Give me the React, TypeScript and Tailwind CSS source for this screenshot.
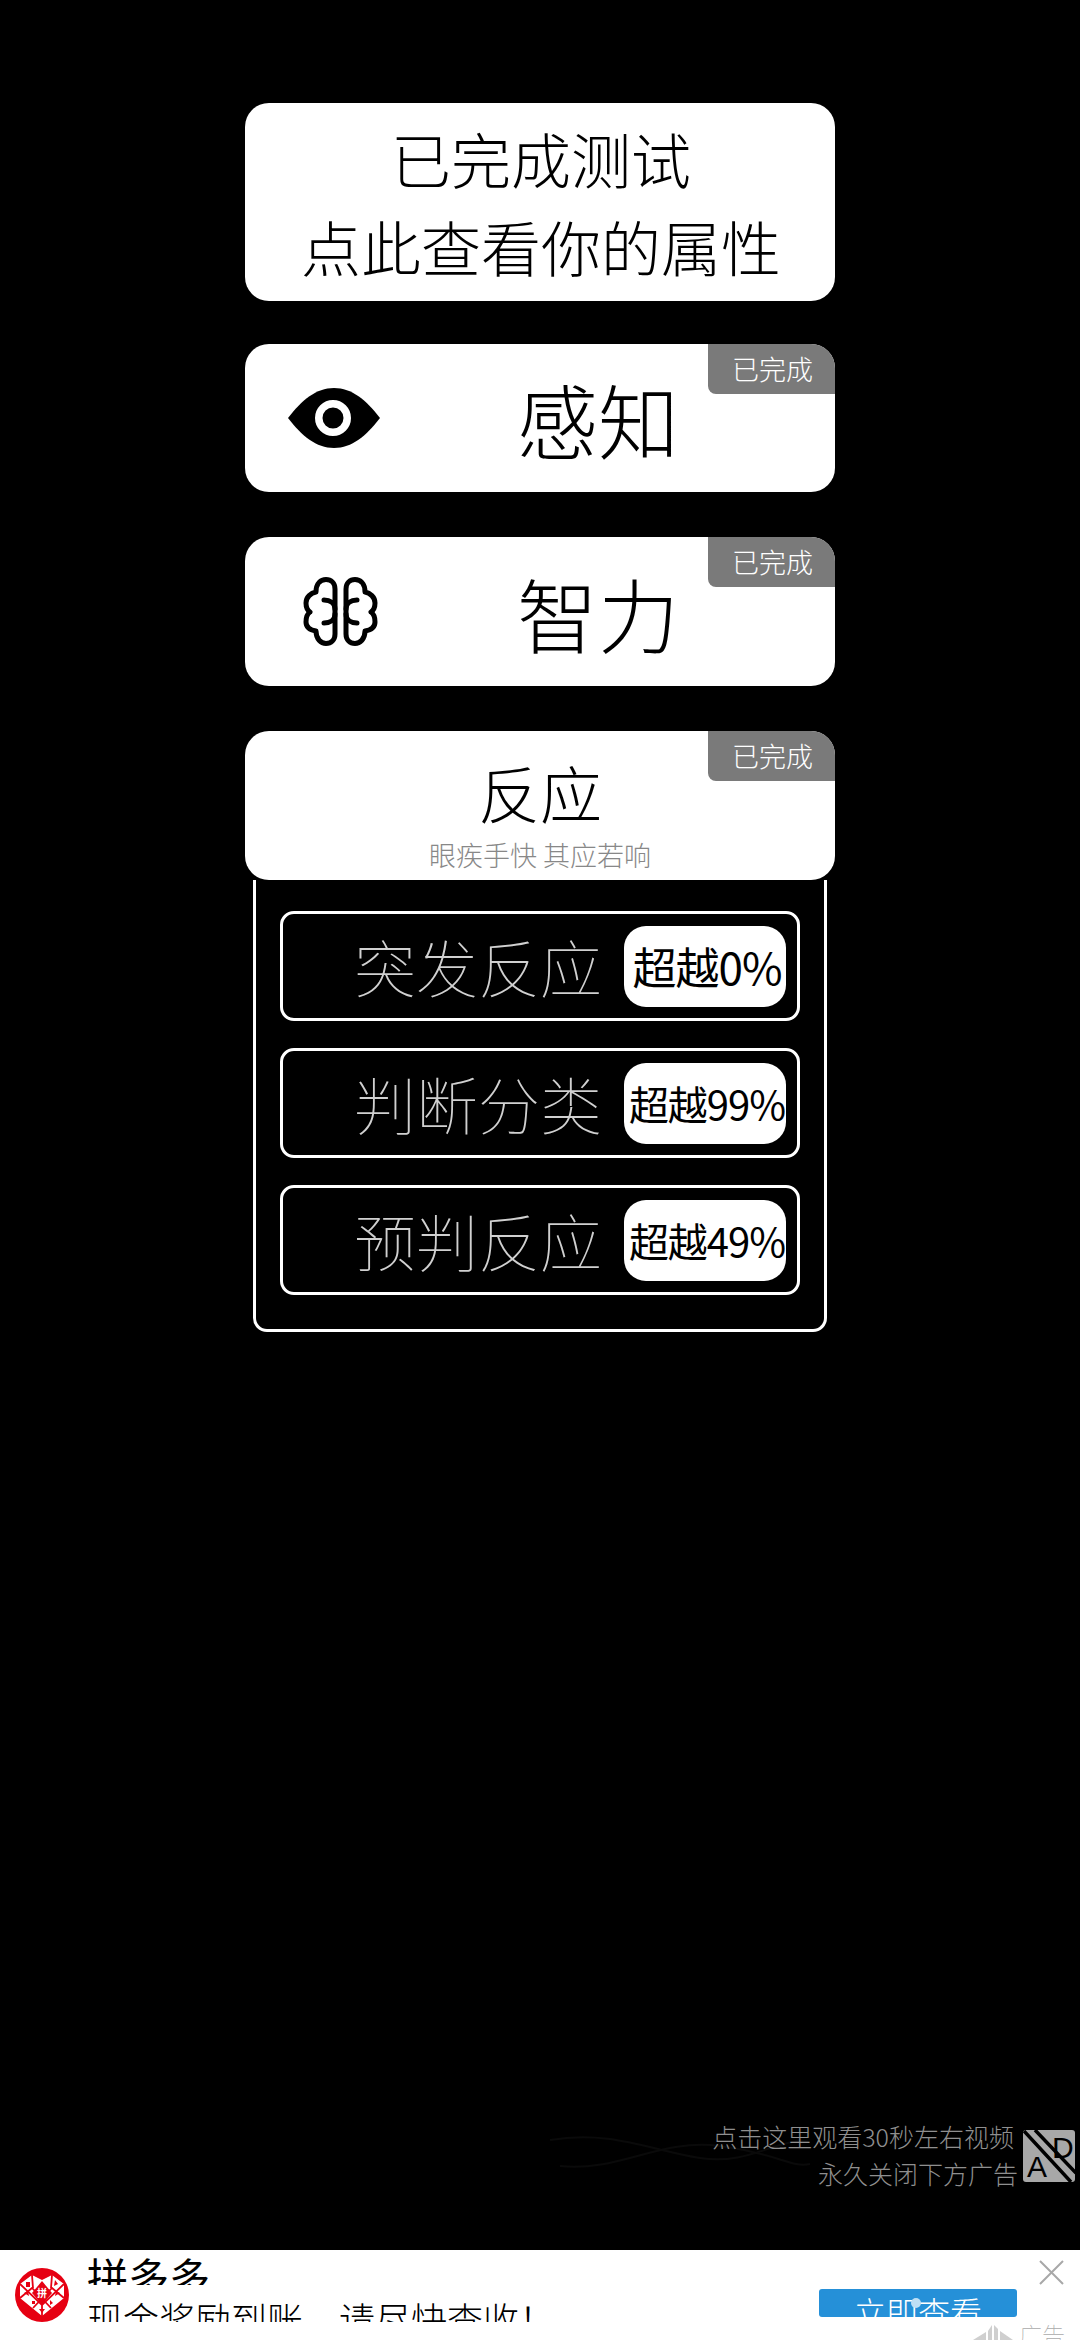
import React from "react";

const cjk = "font-['Noto_Sans_CJK_SC','Noto_Sans',sans-serif]";

function Badge() {
  return (
    <div className="absolute right-0 top-0 flex h-[50px] w-[127px] items-center justify-end rounded-tr-[24px] rounded-bl-[8px] bg-[#7a7a7a] pr-[22px] text-[27px] font-light text-white">
      已完成
    </div>
  );
}

function EyeIcon() {
  return (
    <svg width="92" height="60" viewBox="0 0 92 60">
      <path d="M0 30C14 12 28 0 46 0s32 12 46 30C78 48 64 60 46 60S14 48 0 30Z" fill="#000" />
      <circle cx="45" cy="30" r="14.25" fill="none" stroke="#fff" strokeWidth="7.5" />
    </svg>
  );
}

function BrainLobe() {
  return (
    <>
      <path d="M33 12C33 6 29 2.5 24 2.5S14 6 14 15C9 16 4 20 4 26c0 4 1 7 4 9-3 2-4 6-4 10 0 5 4 8 10 9 0 8 5 12.500 10 12.500S33 63 33 57Z" />
      <path d="M22 23c6 0 11 3 11 9" />
      <path d="M22 46c6 0 11-3 11-9" />
    </>
  );
}

function BrainIcon() {
  return (
    <svg width="77" height="69" viewBox="0 0 77 69" fill="none" stroke="#000" strokeWidth="5" strokeLinecap="round" strokeLinejoin="round">
      <BrainLobe />
      <g transform="translate(77 0) scale(-1 1)">
        <BrainLobe />
      </g>
    </svg>
  );
}

function Row({ label, value, size }: { label: string; value: string; size: string }) {
  return (
    <div className="flex h-[110px] items-center justify-end rounded-[14px] border-[3px] border-white pr-[11px]">
      <span className="mr-[22px] text-[62px] font-thin text-[#d0d0d0]">{label}</span>
      <div className={`flex h-[81px] w-[162px] items-center justify-center rounded-[22px] bg-white pl-[4px] font-normal tracking-[-1px] text-black ${size}`}>
        {value}
      </div>
    </div>
  );
}

function PddLogo() {
  return (
    <svg width="54" height="54" viewBox="0 0 54 54">
      <circle cx="27" cy="27" r="27" fill="#e60012" />
      <path d="M27 12 17 7 5 16v14l22 18 22-18V16L37 7Z" fill="#fff" />
      <path d="M5 16 27 37 49 16M5 30 17 20 36 40M49 30 37 20 18 40M27 37v11M17 7l1 13M37 7l-1 13" stroke="#e60012" strokeWidth="1.8" fill="none" />
      <path d="M27 13 37 25 27 37 17 25Z" fill="#e60012" />
      <path d="M11 14h4v5h-4ZM40 12l3 4-4 2ZM9 25l4-2 1 5ZM45 25l-4-2-1 5ZM24 41h6l-3 4ZM17 33h3v3h-3ZM35 32l3 3-3 2Z" fill="#e60012" />
      <text x="27" y="29" textAnchor="middle" fontSize="10" fontWeight="700" fill="#fff">拼</text>
    </svg>
  );
}

export default function App() {
  return (
    <div className={`${cjk} flex h-[2340px] w-[1080px] flex-col overflow-hidden bg-black`}>
      <div className="flex-1 pt-[103px]">
        <div className="ml-[245px] flex w-[590px] flex-col">
          <div className="flex h-[198px] flex-col items-center justify-center rounded-[24px] bg-white pl-[2px] text-[60px] font-light leading-[88px] text-black">
            <p>已完成测试</p>
            <p>点此查看你的属性</p>
          </div>

          <div className="relative mt-[43px] flex h-[148px] items-center rounded-[24px] bg-white pl-[43px]">
            <EyeIcon />
            <span className="ml-[137px] text-[81px] font-light text-black">感知</span>
            <Badge />
          </div>

          <div className="relative mt-[45px] flex h-[149px] items-center rounded-[24px] bg-white pl-[57px]">
            <BrainIcon />
            <span className="ml-[138px] text-[81px] font-light text-black">智力</span>
            <Badge />
          </div>

          <div className="relative mt-[45px] flex h-[149px] flex-col items-center rounded-[24px] bg-white pt-[22px]">
            <span className="text-[62px] font-light leading-[78px] text-black">反应</span>
            <span className="mt-[6px] text-[27px] font-light leading-[36px] text-[#888]">眼疾手快 其应若响</span>
            <Badge />
          </div>

          <div className="mx-[8px] flex h-[452px] flex-col gap-[27px] rounded-b-[14px] border-[3px] border-t-0 border-white px-[24px] pt-[31px]">
            <Row label="突发反应" value="超越0%" size="text-[44px]" />
            <Row label="判断分类" value="超越99%" size="text-[40px]" />
            <Row label="预判反应" value="超越49%" size="text-[40px]" />
          </div>
        </div>
      </div>

      <div className="relative flex h-[72px] items-start justify-end">
        <svg className="absolute left-[550px] top-[10px]" width="260" height="50" viewBox="0 0 260 50" fill="none" stroke="#0a0a0a" strokeWidth="2">
          <path d="M0 12C60 2 100 22 150 30S230 8 260 14" />
          <path d="M10 38C70 44 110 10 170 18S240 40 260 36" />
        </svg>
        <div className="relative flex flex-col items-end text-[25px] font-light leading-[37px] text-[#8f8f8f]">
          <span className="mr-[4px]">点击这里观看30秒左右视频</span>
          <span>永久关闭下方广告</span>
        </div>
        <svg className="relative ml-[5px] mr-[5px] mt-[12px]" width="52" height="52" viewBox="0 0 52 52">
          <rect width="52" height="52" rx="3" fill="#a8a8a8" />
          <text x="4" y="47" fontSize="30" fill="#000" fontFamily="Liberation Sans">A</text>
          <text x="29" y="28" fontSize="30" fill="#000" fontFamily="Liberation Sans">D</text>
          <path d="M1 1 48 52M12 0 53 43" stroke="#000" strokeWidth="3.5" />
        </svg>
      </div>
      <div className="h-[60px]" />

      <div className="relative flex h-[90px] bg-white">
        <div className="ml-[15px] mt-[18px]">
          <PddLogo />
        </div>
        <div className="ml-[18px] flex flex-col">
          <div className="h-[35px] overflow-hidden">
            <p className="text-[41px] font-normal leading-[50px] text-black">拼多多</p>
          </div>
          <div className="mt-[13px] h-[24px] overflow-hidden">
            <p className="text-[36px] font-light leading-[40px] text-black">现金奖励到账，请尽快查收！</p>
          </div>
        </div>
        <div className="absolute left-[819px] top-[39px] h-[28px] w-[198px] overflow-hidden rounded-[3px] bg-[#2590d8] text-center text-[32px] font-light leading-[44px] text-white">
          立即查看
          <span className="absolute left-[92px] top-[9px] h-[10px] w-[10px] rounded-full bg-[#bfe0f5]" />
        </div>
        <svg className="absolute left-[1039px] top-[10px]" width="25" height="25" viewBox="0 0 25 25">
          <path d="M1 1 24 24M24 1 1 24" stroke="#a8a8a8" strokeWidth="2" />
        </svg>
        <div className="absolute left-[973px] top-[72px] flex items-start">
          <svg className="mt-[3px]" width="40" height="15" viewBox="0 0 40 15">
            <path d="M0 15 13 7v8ZM15 6l4-6v15h-4ZM21 0l4 4v11h-4ZM27 6l13 9H27Z" fill="#cfcfcf" />
          </svg>
          <span className="ml-[6px] text-[23px] font-thin leading-[24px] text-[#aaa]">广告</span>
        </div>
      </div>
    </div>
  );
}
